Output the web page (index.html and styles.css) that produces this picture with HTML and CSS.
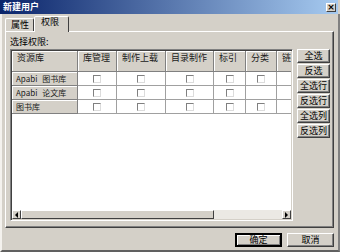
FILE: index.html
```html
<!DOCTYPE html>
<html>
<head>
  <meta charset="UTF-8">
  <title>新建用户</title>
  <link rel="stylesheet" href="styles.css">
</head>
<body>
  <div class="window">
    <div class="titlebar">
      <span class="title">新建用户</span>
      <span class="close-btn">×</span>
    </div>

    <div class="frame">
      <div class="tabs">
        <div class="tab">属性</div>
        <div class="tab active">权限</div>
      </div>

      <div class="tab-panel">
        <div class="panel-label">选择权限:</div>
        <div class="panel-main">
          <div class="grid">
            <div class="grid-view">
              <table class="perm-table">
                <colgroup>
                  <col class="c-name">
                  <col class="c-2">
                  <col class="c-3">
                  <col class="c-4">
                  <col class="c-5">
                  <col class="c-6">
                  <col class="c-7">
                </colgroup>
                <thead>
                  <tr>
                    <th>资源库</th>
                    <th>库管理</th>
                    <th>制作上载</th>
                    <th>目录制作</th>
                    <th>标引</th>
                    <th>分类</th>
                    <th>链接</th>
                  </tr>
                </thead>
                <tbody>
                  <tr>
                    <th class="row-head">Apabi 图书库</th>
                    <td><span class="cb"></span></td>
                    <td><span class="cb"></span></td>
                    <td><span class="cb"></span></td>
                    <td><span class="cb"></span></td>
                    <td><span class="cb"></span></td>
                    <td><span class="cb"></span></td>
                  </tr>
                  <tr>
                    <th class="row-head">Apabi 论文库</th>
                    <td><span class="cb"></span></td>
                    <td><span class="cb"></span></td>
                    <td><span class="cb"></span></td>
                    <td><span class="cb"></span></td>
                    <td></td>
                    <td><span class="cb"></span></td>
                  </tr>
                  <tr>
                    <th class="row-head">图书库</th>
                    <td><span class="cb"></span></td>
                    <td><span class="cb"></span></td>
                    <td><span class="cb"></span></td>
                    <td><span class="cb"></span></td>
                    <td><span class="cb"></span></td>
                    <td><span class="cb"></span></td>
                  </tr>
                </tbody>
              </table>
            </div>
            <div class="hscroll">
              <span class="sb-btn"><span class="arrow-left"></span></span>
              <span class="sb-thumb"></span>
              <span class="sb-track"></span>
              <span class="sb-btn"><span class="arrow-right"></span></span>
            </div>
          </div>

          <div class="side-buttons">
            <button class="btn">全选</button>
            <button class="btn">反选</button>
            <button class="btn">全选行</button>
            <button class="btn">反选行</button>
            <button class="btn">全选列</button>
            <button class="btn">反选列</button>
          </div>
        </div>
      </div>

      <div class="footer">
        <button class="btn btn-default">确定</button>
        <button class="btn">取消</button>
      </div>
    </div>
  </div>
</body>
</html>
```

FILE: styles.css
```css
* {
  margin: 0;
  padding: 0;
  box-sizing: border-box;
}

body {
  width: 340px;
  height: 252px;
  background-color: #d4d0c8;
  font-family: "Noto Sans CJK SC", "DejaVu Sans", sans-serif;
  font-size: 9px;
  color: #000;
  overflow: hidden;
}

.window {
  width: 340px;
  height: 252px;
  display: flex;
  flex-direction: column;
  background-color: #d4d0c8;
}

/* Title bar */
.titlebar {
  height: 14px;
  width: 338px;
  display: flex;
  align-items: center;
  justify-content: space-between;
  padding: 0 2px 0 3px;
  background: linear-gradient(90deg, #0a246a, #a6caf0);
}

.title {
  color: white;
  font-weight: bold;
  font-size: 9px;
  line-height: 10px;
}

.close-btn {
  width: 10px;
  height: 9px;
  display: flex;
  align-items: center;
  justify-content: center;
  background-color: #d4d0c8;
  border: 1px solid;
  border-color: #fff #404040 #404040 #fff;
  font-family: "DejaVu Sans", sans-serif;
  font-weight: bold;
  font-size: 9px;
  line-height: 7px;
}

/* Window frame below the title bar */
.frame {
  flex: 1;
  display: flex;
  flex-direction: column;
  border-left: 2px solid #f4f2ee;
  border-right: 2px solid #808080;
  border-bottom: 2px solid #606060;
}

/* Tabs */
.tabs {
  height: 17px;
  display: flex;
  align-items: flex-end;
  padding-left: 3px;
}

.tab {
  height: 13px;
  width: 29px;
  padding-left: 5px;
  line-height: 12px;
  border: 1px solid;
  border-bottom: none;
  border-color: #fff #404040 transparent #fff;
  border-radius: 2px 2px 0 0;
}

.tab.active {
  position: relative;
  z-index: 1;
  height: 16px;
  width: 35px;
  padding-left: 6px;
  line-height: 10px;
  margin-bottom: -1px;
  background-color: #d4d0c8;
}

.tab-panel {
  width: 329px;
  height: 197px;
  margin-left: 3px;
  border: 1px solid;
  border-color: #fff #404040 #404040 #fff;
  box-shadow: inset -1px -1px 0 #808080;
  padding: 4px 0 0 4px;
}

.panel-label {
  height: 13px;
  line-height: 11px;
}

.panel-main {
  display: flex;
  gap: 4px;
}

/* Permission grid */
.grid {
  width: 283px;
  height: 172px;
  display: flex;
  flex-direction: column;
  background-color: white;
  border: 1px solid;
  border-color: #808080 #fff #fff #808080;
  box-shadow: inset 1px 1px 0 #404040, inset -1px -1px 0 #d4d0c8;
  padding: 1px;
}

.grid-view {
  flex: 1;
  overflow: hidden;
}

.perm-table {
  table-layout: fixed;
  width: 305px;
  border-collapse: separate;
  border-spacing: 0;
}

.c-name { width: 66px; }
.c-2 { width: 39px; }
.c-3 { width: 49px; }
.c-4 { width: 48px; }
.c-5 { width: 32px; }
.c-6 { width: 31px; }
.c-7 { width: 40px; }

.perm-table th {
  height: 21px;
  font-weight: normal;
  text-align: left;
  vertical-align: top;
  white-space: nowrap;
  overflow: hidden;
  padding: 2px 0 0 5px;
  line-height: 10px;
  color: #202020;
  background-color: #d4d0c8;
  border-right: 1px solid #808080;
  border-bottom: 1px solid #808080;
  box-shadow: inset 1px 1px 0 #fff;
}

.perm-table th.row-head {
  height: 14px;
  padding: 2px 0 0 4px;
  font-size: 8px;
  word-spacing: 3px;
}

.perm-table td {
  height: 14px;
  text-align: center;
  vertical-align: middle;
  border-right: 1px solid #a0a0a0;
  border-bottom: 1px solid #a0a0a0;
  line-height: 0;
}

.cb {
  display: inline-block;
  width: 8px;
  height: 8px;
  background-color: white;
  border: 1px solid;
  border-color: #808080 #dcdcdc #dcdcdc #808080;
}

/* Horizontal scroll bar */
.hscroll {
  height: 9px;
  display: flex;
}

.sb-btn {
  width: 9px;
  height: 9px;
  display: flex;
  align-items: center;
  justify-content: center;
  background-color: #d4d0c8;
  border: 1px solid;
  border-color: #fff #404040 #404040 #fff;
}

.sb-thumb {
  width: 193px;
  background-color: #d4d0c8;
  border: 1px solid;
  border-color: #fff #404040 #404040 #fff;
}

.sb-track {
  flex: 1;
  background-color: #ebe9e4;
}

.arrow-left {
  border-top: 3px solid transparent;
  border-bottom: 3px solid transparent;
  border-right: 3px solid #000;
}

.arrow-right {
  border-top: 3px solid transparent;
  border-bottom: 3px solid transparent;
  border-left: 3px solid #000;
}

/* Buttons */
.side-buttons {
  display: flex;
  flex-direction: column;
  gap: 1px;
}

.btn {
  width: 33px;
  height: 14px;
  font-family: inherit;
  font-size: 9px;
  line-height: 10px;
  color: #000;
  background-color: #d4d0c8;
  border: 1px solid;
  border-color: #fff #404040 #404040 #fff;
  box-shadow: inset -1px -1px 0 #808080;
}

.footer {
  flex: 1;
  display: flex;
  justify-content: flex-end;
  align-items: flex-start;
  gap: 5px;
  padding: 5px 4px 0 0;
}

.footer .btn {
  width: 47px;
}

.btn-default {
  border-width: 2px;
  border-color: #000;
  box-shadow: inset 1px 1px 0 #fff, inset -1px -1px 0 #808080;
}
```
